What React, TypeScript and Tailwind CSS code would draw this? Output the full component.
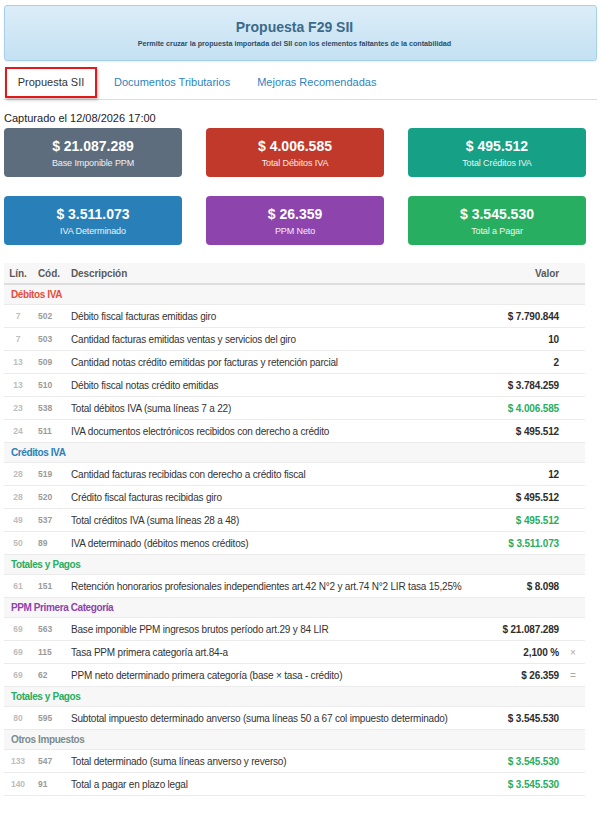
import React from 'react';

// --- DATA ---
type Row = { lin: string; cod: string; desc: string; value: string; green?: boolean; sym?: string };
type Section = { title: string; color: string; rows: Row[] };

const CARDS = [
    { value: "$ 21.087.289", label: "Base Imponible PPM", bg: "bg-[#5d6d7e]" },
    { value: "$ 4.006.585", label: "Total Débitos IVA", bg: "bg-[#c0392b]" },
    { value: "$ 495.512", label: "Total Créditos IVA", bg: "bg-[#16a085]" },
    { value: "$ 3.511.073", label: "IVA Determinado", bg: "bg-[#2980b9]" },
    { value: "$ 26.359", label: "PPM Neto", bg: "bg-[#8e44ad]" },
    { value: "$ 3.545.530", label: "Total a Pagar", bg: "bg-[#27ae60]" },
];

const SECTIONS: Section[] = [
    {
        title: "Débitos IVA", color: "text-[#e74c3c]", rows: [
            { lin: "7", cod: "502", desc: "Débito fiscal facturas emitidas giro", value: "$ 7.790.844" },
            { lin: "7", cod: "503", desc: "Cantidad facturas emitidas ventas y servicios del giro", value: "10" },
            { lin: "13", cod: "509", desc: "Cantidad notas crédito emitidas por facturas y retención parcial", value: "2" },
            { lin: "13", cod: "510", desc: "Débito fiscal notas crédito emitidas", value: "$ 3.784.259" },
            { lin: "23", cod: "538", desc: "Total débitos IVA (suma líneas 7 a 22)", value: "$ 4.006.585", green: true },
            { lin: "24", cod: "511", desc: "IVA documentos electrónicos recibidos con derecho a crédito", value: "$ 495.512" },
        ]
    },
    {
        title: "Créditos IVA", color: "text-[#2980b9]", rows: [
            { lin: "28", cod: "519", desc: "Cantidad facturas recibidas con derecho a crédito fiscal", value: "12" },
            { lin: "28", cod: "520", desc: "Crédito fiscal facturas recibidas giro", value: "$ 495.512" },
            { lin: "49", cod: "537", desc: "Total créditos IVA (suma líneas 28 a 48)", value: "$ 495.512", green: true },
            { lin: "50", cod: "89", desc: "IVA determinado (débitos menos créditos)", value: "$ 3.511.073", green: true },
        ]
    },
    {
        title: "Totales y Pagos", color: "text-[#27ae60]", rows: [
            { lin: "61", cod: "151", desc: "Retención honorarios profesionales independientes art.42 N°2 y art.74 N°2 LIR tasa 15,25%", value: "$ 8.098" },
        ]
    },
    {
        title: "PPM Primera Categoría", color: "text-[#8e44ad]", rows: [
            { lin: "69", cod: "563", desc: "Base imponible PPM ingresos brutos período art.29 y 84 LIR", value: "$ 21.087.289" },
            { lin: "69", cod: "115", desc: "Tasa PPM primera categoría art.84-a", value: "2,100 %", sym: "×" },
            { lin: "69", cod: "62", desc: "PPM neto determinado primera categoría (base × tasa - crédito)", value: "$ 26.359", sym: "=" },
        ]
    },
    {
        title: "Totales y Pagos", color: "text-[#27ae60]", rows: [
            { lin: "80", cod: "595", desc: "Subtotal impuesto determinado anverso (suma líneas 50 a 67 col impuesto determinado)", value: "$ 3.545.530" },
        ]
    },
    {
        title: "Otros Impuestos", color: "text-[#7f8c8d]", rows: [
            { lin: "133", cod: "547", desc: "Total determinado (suma líneas anverso y reverso)", value: "$ 3.545.530", green: true },
            { lin: "140", cod: "91", desc: "Total a pagar en plazo legal", value: "$ 3.545.530", green: true },
        ]
    },
];

// --- TABLE ROW ---
const DataRow = ({ row }: { row: Row }) => (
    <div className="flex items-center h-[23px] border-b border-[#ebebeb] bg-white">
        <div className="w-[28px] text-center text-[8.5px] font-bold text-[#bdbdbd]">{row.lin}</div>
        <div className="w-[34px] pl-[6px] text-[8.5px] font-bold text-[#9a9a9a]">{row.cod}</div>
        <div className="flex-1 min-w-0 pl-[5px] text-[10px] tracking-[-0.2px] text-[#333] whitespace-nowrap">{row.desc}</div>
        <div className={`pr-[2px] text-right text-[10px] font-bold tracking-[-0.15px] ${row.green ? 'text-[#27ae60]' : 'text-[#2d2d2d]'}`}>{row.value}</div>
        <div className="w-[24px] text-center text-[10px] text-[#aaa]">{row.sym || ''}</div>
    </div>
);

export default function App() {
    return (
        <div className="w-[614px] min-h-[838px] bg-white pl-[4px] pt-[5px] font-['Liberation_Sans',Arial,sans-serif] text-[#333]">
            {/* Header */}
            <div className="w-[593px] h-[56px] rounded-[3px] border border-[#a6d0ea] bg-gradient-to-b from-[#dcedf8] to-[#c4e1f2] shadow-[0_1px_2px_rgba(0,0,0,0.08)] flex flex-col items-center pt-[13px] pr-[12px]">
                <h1 className="text-[14px] leading-[17px] font-bold text-[#3a6b8b]">Propuesta F29 SII</h1>
                <p className="mt-[3px] text-[7.2px] leading-[9px] font-bold text-[#2c4c63]">Permite cruzar la propuesta importada del SII con los elementos faltantes de la contabilidad</p>
            </div>

            {/* Tabs */}
            <div className="w-[593px] flex items-start pt-[6px] border-b border-[#dddddd] h-[39px]">
                <div className="ml-[1px] w-[92px] h-[31px] border-2 border-[#e3191c] shadow-[1px_2px_3px_rgba(0,0,0,0.25)] flex items-center justify-center text-[11px] text-[#333]">
                    Propuesta SII
                </div>
                <div className="h-[31px] ml-[3px] px-[14px] flex items-center text-[11px] text-[#2d83c0]">Documentos Tributarios</div>
                <div className="h-[31px] px-[13px] flex items-center text-[11px] text-[#2d83c0]">Mejoras Recomendadas</div>
            </div>

            <div className="mt-[11px] h-[15px] leading-[15px] text-[11px] text-[#222]">Capturado el 12/08/2026 17:00</div>

            {/* Summary cards */}
            <div className="mt-[2px] grid grid-cols-[178px_178px_178px] gap-x-[24px] gap-y-[19px]">
                {CARDS.map((c) => (
                    <div key={c.label} className={`${c.bg} h-[49px] rounded-[4px] flex flex-col items-center pt-[10px] text-white`}>
                        <div className="text-[14px] leading-[16px] font-bold">{c.value}</div>
                        <div className="mt-[3px] text-[9px] leading-[12px] tracking-[-0.1px] text-white/90">{c.label}</div>
                    </div>
                ))}
            </div>

            {/* Table */}
            <div className="mt-[18px] w-[581px]">
                <div className="flex items-center h-[22px] bg-[#f7f7f7] border-b-2 border-[#dedede] text-[10px] font-semibold tracking-[-0.1px] text-[#5a5a5a]">
                    <div className="w-[28px] text-center">Lín.</div>
                    <div className="w-[34px] pl-[6px]">Cód.</div>
                    <div className="flex-1 pl-[5px]">Descripción</div>
                    <div className="pr-[2px] text-right">Valor</div>
                    <div className="w-[24px]" />
                </div>
                {SECTIONS.map((s, i) => (
                    <div key={i}>
                        <div className={`h-[20px] flex items-center pl-[7px] bg-[#f7f7f7] border-b border-[#ebebeb] text-[10px] font-bold tracking-[-0.4px] ${s.color}`}>
                            {s.title}
                        </div>
                        {s.rows.map((r) => <DataRow key={r.lin + r.cod} row={r} />)}
                    </div>
                ))}
            </div>
        </div>
    );
}
